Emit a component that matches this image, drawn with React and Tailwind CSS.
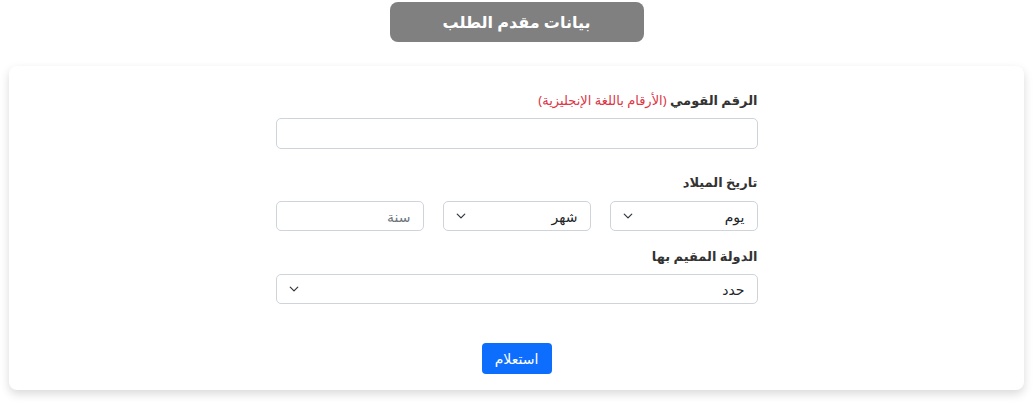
const Chevron = () => (
  <svg width="10" height="10" viewBox="0 0 16 16" className="text-[#343a40]">
    <path fill="none" stroke="currentColor" strokeLinecap="round" strokeLinejoin="round" strokeWidth="2" d="m2 5 6 6 6-6" />
  </svg>
);

const SelectBox = ({ value, className = '' }) => (
  <div className={`flex items-center justify-between h-[30px] px-3 border border-[#ced4da] rounded-[5px] bg-white text-[14px] text-[#212529] ${className}`}>
    <span>{value}</span>
    <Chevron />
  </div>
);

const App = () => {
  return (
    <div dir="rtl" className="min-h-[407px] bg-white flex flex-col items-center pt-[2px]" style={{ fontFamily: '"Noto Sans", "DejaVu Sans", sans-serif' }}>
      {/* العنوان */}
      <div className="w-[254px] h-[40px] rounded-lg bg-[#808080] flex items-center justify-center text-white font-bold text-[16px]">
        بيانات مقدم الطلب
      </div>

      {/* البطاقة */}
      <div className="mt-[24px] w-[1015px] h-[324px] bg-white rounded-lg shadow-[0_4px_10px_rgba(0,0,0,0.15)] pt-[25px] flex flex-col items-center">
        <div className="w-[482px] flex flex-col">
          <label className="text-[13px] font-bold text-[#333] mb-[9px] h-[18px]">
            الرقم القومي <span className="font-normal text-[#dc3545]">(الأرقام باللغة الإنجليزية)</span>
          </label>
          <input type="text" className="h-[31px] border border-[#ced4da] rounded-[5px] px-3 outline-none" />

          <label className="mt-[24px] text-[13px] font-bold text-[#333] mb-[10px] h-[18px]">تاريخ الميلاد</label>
          <div className="grid grid-cols-3 gap-[19px]">
            <SelectBox value="يوم" />
            <SelectBox value="شهر" />
            <input
              type="text"
              placeholder="سنة"
              className="h-[30px] border border-[#ced4da] rounded-[5px] px-3 text-[14px] outline-none placeholder:text-[#6c757d]"
            />
          </div>

          <label className="mt-[16px] text-[13px] font-bold text-[#333] mb-[9px] h-[18px]">الدولة المقيم بها</label>
          <SelectBox value="حدد" />

          <div className="flex justify-center mt-[39px]">
            <button className="h-[31px] w-[70px] rounded-[4px] bg-[#0d6efd] text-white text-[14px]">استعلام</button>
          </div>
        </div>
      </div>
    </div>
  );
};

export default App;
